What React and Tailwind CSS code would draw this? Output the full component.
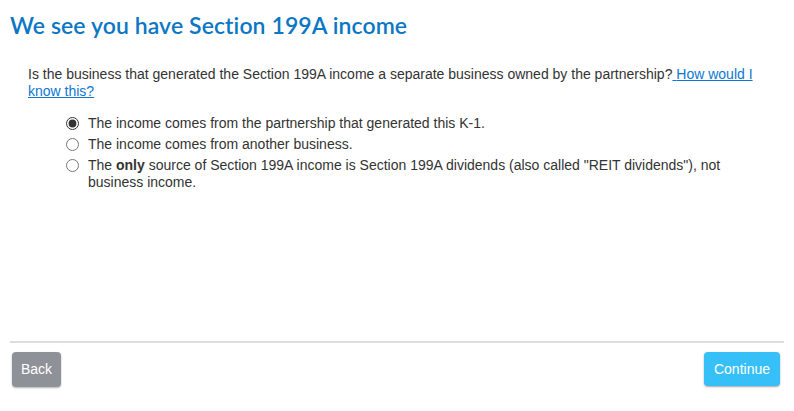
import React, { useState } from 'react';

const options = [
  { id: 'partnership', label: <>The income comes from the partnership that generated this K-1.</> },
  { id: 'another', label: <>The income comes from another business.</> },
  {
    id: 'reit',
    label: (
      <>
        The <b>only</b> source of Section 199A income is Section 199A dividends (also called "REIT dividends"), not
        business income.
      </>
    ),
  },
];

const App = () => {
  const [choice, setChoice] = useState('partnership');

  return (
    <div className="w-[794px] h-[411px] bg-white flex flex-col font-['Liberation_Sans',Arial,sans-serif] text-[14px] text-[#333]">
      {/* 제목 */}
      <h1 className="pl-[10px] pt-[11px] text-[23px] leading-[28px] font-semibold text-[#0b77c5] font-['Lato','Open_Sans',sans-serif] tracking-[0.1px]">
        We see you have Section 199A income
      </h1>

      {/* 질문 영역 */}
      <div className="pl-[28px] pr-[30px] pt-[27px] leading-[17px]">
        Is the business that generated the Section 199A income a separate business owned by the partnership?
        <a href="#" className="text-[#0d77d1] underline">
          {' '}How would I know this?
        </a>
      </div>

      <div className="pl-[66px] pr-[60px] pt-[15px] flex flex-col gap-[4px] leading-[17px]">
        {options.map((opt) => (
          <label key={opt.id} className="flex items-start gap-[9px] cursor-pointer">
            <input
              type="radio"
              name="source"
              checked={choice === opt.id}
              onChange={() => setChoice(opt.id)}
              className="mt-[2px] w-[13px] h-[13px] shrink-0 accent-[#333]"
            />
            <span>{opt.label}</span>
          </label>
        ))}
      </div>

      {/* 하단 버튼 */}
      <div className="mt-auto mx-[10px] mb-[24px] border-t-2 border-[#dddddd] pt-[9px] flex justify-between">
        <button className="ml-[2px] h-[35px] px-[9px] rounded-[4px] bg-[#8f9199] text-white text-[14px] shadow-[0_1px_2px_rgba(0,0,0,0.3)]">
          Back
        </button>
        <button className="mr-[4px] h-[34px] px-[10px] rounded-[4px] bg-[#36c0f7] text-white text-[14px] shadow-[0_1px_2px_rgba(0,0,0,0.35)]">
          Continue
        </button>
      </div>
    </div>
  );
};

export default App;
